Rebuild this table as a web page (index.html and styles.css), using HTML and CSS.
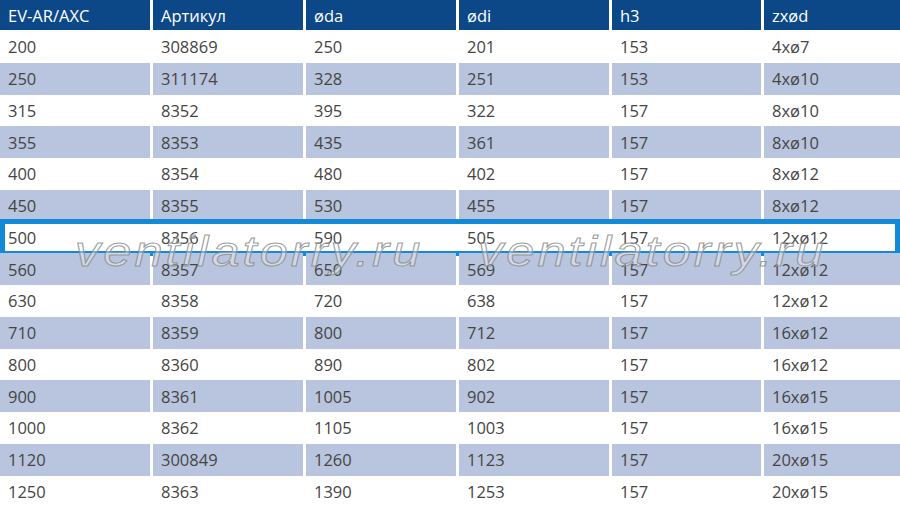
FILE: index.html
```html
<!DOCTYPE html>
<html lang="ru">
<head>
<meta charset="utf-8">
<title>EV-AR/AXC</title>
<link rel="stylesheet" href="styles.css">
</head>
<body>
<div class="table">
  <div class="row head">
    <div class="cell">EV-AR/AXC</div><div class="cell">Артикул</div><div class="cell">øda</div><div class="cell">ødi</div><div class="cell">h3</div><div class="cell">zxød</div>
  </div>
  <div class="row"><div class="cell">200</div><div class="cell">308869</div><div class="cell">250</div><div class="cell">201</div><div class="cell">153</div><div class="cell">4xø7</div></div>
  <div class="row alt"><div class="cell">250</div><div class="cell">311174</div><div class="cell">328</div><div class="cell">251</div><div class="cell">153</div><div class="cell">4xø10</div></div>
  <div class="row"><div class="cell">315</div><div class="cell">8352</div><div class="cell">395</div><div class="cell">322</div><div class="cell">157</div><div class="cell">8xø10</div></div>
  <div class="row alt"><div class="cell">355</div><div class="cell">8353</div><div class="cell">435</div><div class="cell">361</div><div class="cell">157</div><div class="cell">8xø10</div></div>
  <div class="row"><div class="cell">400</div><div class="cell">8354</div><div class="cell">480</div><div class="cell">402</div><div class="cell">157</div><div class="cell">8xø12</div></div>
  <div class="row alt"><div class="cell">450</div><div class="cell">8355</div><div class="cell">530</div><div class="cell">455</div><div class="cell">157</div><div class="cell">8xø12</div></div>
  <div class="row selected"><div class="cell">500</div><div class="cell">8356</div><div class="cell">590</div><div class="cell">505</div><div class="cell">157</div><div class="cell">12xø12</div></div>
  <div class="row alt"><div class="cell">560</div><div class="cell">8357</div><div class="cell">650</div><div class="cell">569</div><div class="cell">157</div><div class="cell">12xø12</div></div>
  <div class="row"><div class="cell">630</div><div class="cell">8358</div><div class="cell">720</div><div class="cell">638</div><div class="cell">157</div><div class="cell">12xø12</div></div>
  <div class="row alt"><div class="cell">710</div><div class="cell">8359</div><div class="cell">800</div><div class="cell">712</div><div class="cell">157</div><div class="cell">16xø12</div></div>
  <div class="row"><div class="cell">800</div><div class="cell">8360</div><div class="cell">890</div><div class="cell">802</div><div class="cell">157</div><div class="cell">16xø12</div></div>
  <div class="row alt"><div class="cell">900</div><div class="cell">8361</div><div class="cell">1005</div><div class="cell">902</div><div class="cell">157</div><div class="cell">16xø15</div></div>
  <div class="row"><div class="cell">1000</div><div class="cell">8362</div><div class="cell">1105</div><div class="cell">1003</div><div class="cell">157</div><div class="cell">16xø15</div></div>
  <div class="row alt"><div class="cell">1120</div><div class="cell">300849</div><div class="cell">1260</div><div class="cell">1123</div><div class="cell">157</div><div class="cell">20xø15</div></div>
  <div class="row"><div class="cell">1250</div><div class="cell">8363</div><div class="cell">1390</div><div class="cell">1253</div><div class="cell">157</div><div class="cell">20xø15</div></div>

  <div class="watermark wm1">ventilatorry.ru</div>
  <div class="watermark wm2">ventilatorry.ru</div>
</div>
</body>
</html>
```

FILE: styles.css
```css
html, body {
  margin: 0;
  padding: 0;
  background: #ffffff;
}

body {
  width: 900px;
  height: 511px;
  overflow: hidden;
  font-family: "Open Sans", "Noto Sans", "DejaVu Sans", sans-serif;
}

.table {
  position: relative;
  width: 900px;
}

.row {
  display: grid;
  grid-template-columns: 150px 150px 150px 150px 149px 1fr;
  column-gap: 3px;
  height: 31.75px;
  position: relative;
}

.cell {
  display: flex;
  align-items: center;
  padding-left: 8px;
  font-size: 16.5px;
  color: #454545;
  white-space: nowrap;
}

.head {
  height: 31px;
}

.head .cell {
  height: 30px;
  background: #0c4888;
  color: #ffffff;
  font-size: 16.5px;
  font-weight: 500;
}

.alt .cell {
  background: #b9c5de;
}

.selected::after {
  content: "";
  position: absolute;
  left: 0;
  right: 0;
  top: -2.5px;
  bottom: -2.75px;
  border: 5px solid #128ad8;
  pointer-events: none;
}

.watermark {
  position: absolute;
  top: 227px;
  font-family: "Liberation Sans", Arial, sans-serif;
  font-style: italic;
  font-size: 42px;
  line-height: 50px;
  letter-spacing: 2.6px;
  color: rgba(255, 255, 255, 0.35);
  -webkit-text-stroke: 1px rgba(140, 140, 140, 0.85);
  transform: scaleX(1.2);
  transform-origin: left top;
  white-space: nowrap;
  pointer-events: none;
}

.wm1 {
  left: 75px;
}

.wm2 {
  left: 478px;
}
```
